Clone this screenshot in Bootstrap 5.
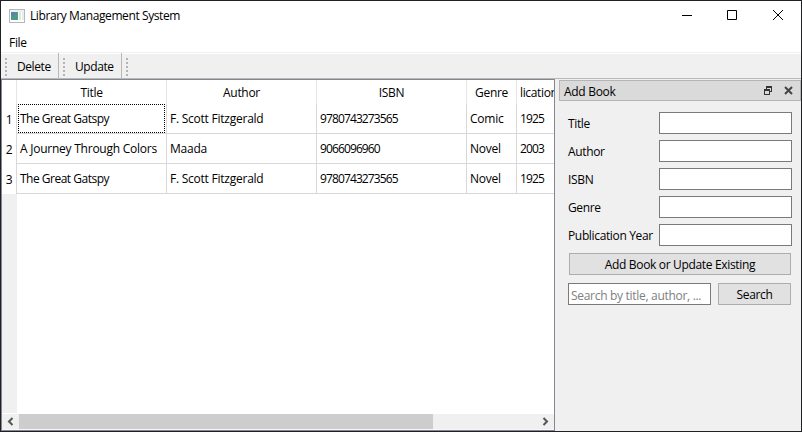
<!DOCTYPE html>
<html lang="en">
<head>
<meta charset="utf-8">
<meta name="viewport" content="width=device-width, initial-scale=1">
<title>Library Management System</title>
<link href="https://cdn.jsdelivr.net/npm/bootstrap@5.3.0/dist/css/bootstrap.min.css" rel="stylesheet">
<style>
body{font-family:"Open Sans","Noto Sans",sans-serif;font-size:12px;line-height:16px;color:#000;letter-spacing:-.3px;background:#fff}
.app{width:802px;height:432px;border:1px solid #202125;background:#f0f0f0}
.titlebar{height:30px;padding-left:8px;background:#fff}
.titlebar .caption{margin-left:5px;letter-spacing:-.4px}
.win-btn{width:46px;height:30px;border:0;background:none;padding:0}
.menus{height:21px;padding:2px 0 0 8px;background:#fff}
.tools{height:27px;border-top:1px solid #f0f0f0;border-bottom:1px solid #b8b8b8;box-shadow:inset 0 1px #fff}
.tool-group{height:25px;padding-top:2px;border-right:1px solid #b8b8b8}
.delete-group{width:58px}
.update-group{width:63px}
.grip{width:3px;height:18px;margin:0 9px 0 4px;background:radial-gradient(circle at 1px 1px,#b4b4b4 1.1px,transparent 1.2px) 0 0/3px 4px}
.tool-btn{border:0;background:none;padding:0;color:#000;letter-spacing:-.42px}
.table-pane{width:554px;border:1px solid #828790;background:#fff}
.grid-rows{display:grid;grid-template-columns:15px 150px 150px 150px 50px 37px;overflow:hidden}
.grid-rows>div{border-right:1px solid #d8d8d8;overflow:hidden;white-space:nowrap}
.grid-rows>div:nth-child(6n){border-right:0}
.grid-rows>.hd{height:24px;line-height:26px;text-align:center;border-color:#e5e5e5}
.grid-rows>.hd-cut{text-align:left;padding-left:3px;letter-spacing:-.35px}
.grid-rows>.cell{height:30px;line-height:30px;padding-left:3px;border-bottom:1px solid #d8d8d8;letter-spacing:-.24px}
.grid-rows>.num{height:30px;line-height:31px;text-align:center}
.grid-rows>.gatspy{letter-spacing:-.5px}
.grid-rows>.current{padding:0 1px}
.current span{display:block;height:29px;border:1px dotted #000;padding-left:1px;line-height:28px}
.grid-rows>.digits{letter-spacing:-.88px}
.gutter{width:15px;background:#f0f0f0;margin-bottom:1px}
.hscroll{height:16px;border-bottom:1px solid #f8f8f8;background:#f0f0f0}
.thumb{width:414px;background:#cdcdcd}
.arrow{width:17px}
.dock{width:246px;padding:1px 0 0 4px}
.dock-title{height:21px;border:1px solid #b5b5b5;background:#dadada;padding:0 3px 0 4px}
.dock-title span{padding-top:2px}
.dock-body{padding:11px 9px 0 9px}
.form-line{height:22px;margin-bottom:6px}
.form-line label{padding-top:2px;letter-spacing:-.35px}
.field{height:22px;border:1px solid #7a7a7a;border-radius:0;background:#fff;padding:2px 2px 0;font-size:12px;letter-spacing:-.3px;color:#000;outline:0;min-width:0}
.field::placeholder{color:#808080;opacity:1}
.form-line .field{width:133px}
.push{height:22px;border:1px solid #adadad;background:#e1e1e1;padding:2px 0 0;color:#000;line-height:18px;letter-spacing:-.33px}
.wide-row{margin:7px 1px 8px 1px}
.search-row{gap:7px;margin-right:1px}
.search-row .push{width:73px}
</style>
<script src="https://cdn.jsdelivr.net/npm/bootstrap@5.3.0/dist/js/bootstrap.bundle.min.js"></script>
</head>
<body class="overflow-hidden">
<div class="app d-flex flex-column">
  <header class="titlebar d-flex align-items-center">
    <svg width="16" height="14" viewBox="0 0 16 14" shape-rendering="crispEdges"><path fill="#b3b8ba" d="M0 0h16v14H0z"/><path fill="#edf0f1" d="M1 1h14v2H1z"/><path fill="#fff" d="M1 3h14v10H1z"/><path fill="#4d998c" d="M2 3h7v8H2z"/><path fill="#5c83a3" d="M2 3h4v4H2z"/><path fill="#d9ebd9" d="M10 3h2v8h-2z"/><path fill="#e9ebed" d="M13 3h2v8h-2z"/></svg>
    <span class="caption">Library Management System</span>
    <div class="d-flex ms-auto">
      <button class="win-btn" aria-label="Minimize"><svg width="46" height="30" class="d-block"><path d="M19 14.500h10" stroke="#000"/></svg></button>
      <button class="win-btn" aria-label="Maximize"><svg width="46" height="30" class="d-block"><path d="M18.500 9.500h9v9h-9z" stroke="#000" fill="none"/></svg></button>
      <button class="win-btn" aria-label="Close"><svg width="46" height="30" class="d-block"><path d="M18 9l10 10M28 9L18 19" stroke="#000" fill="none"/></svg></button>
    </div>
  </header>
  <nav class="menus d-flex align-items-center"><span>File</span></nav>
  <div class="tools d-flex align-items-end">
    <div class="tool-group delete-group d-flex align-items-center"><i class="grip"></i><button class="tool-btn">Delete</button></div>
    <div class="tool-group update-group d-flex align-items-center"><i class="grip"></i><button class="tool-btn">Update</button></div>
    <div class="tool-group d-flex align-items-center border-0"><i class="grip"></i></div>
  </div>
  <main class="d-flex flex-grow-1">
    <section class="table-pane d-flex flex-column flex-shrink-0">
      <div class="grid-rows">
        <div class="hd"></div><div class="hd">Title</div><div class="hd">Author</div><div class="hd">ISBN</div><div class="hd">Genre</div><div class="hd hd-cut">lication</div>
        <div class="num">1</div><div class="cell gatspy current"><span>The Great Gatspy</span></div><div class="cell">F. Scott Fitzgerald</div><div class="cell digits">9780743273565</div><div class="cell">Comic</div><div class="cell digits">1925</div>
        <div class="num">2</div><div class="cell">A Journey Through Colors</div><div class="cell">Maada</div><div class="cell digits">9066096960</div><div class="cell">Novel</div><div class="cell digits">2003</div>
        <div class="num">3</div><div class="cell gatspy">The Great Gatspy</div><div class="cell">F. Scott Fitzgerald</div><div class="cell digits">9780743273565</div><div class="cell">Novel</div><div class="cell digits">1925</div>
      </div>
      <div class="gutter flex-grow-1"></div>
      <div class="hscroll d-flex">
        <svg class="arrow" height="15"><path d="M10.500 4l-3.500 3.500 3.500 3.500" fill="none" stroke="#555" stroke-width="2"/></svg>
        <div class="thumb"></div>
        <svg class="arrow ms-auto" height="15"><path d="M6.500 4l3.500 3.500-3.500 3.500" fill="none" stroke="#555" stroke-width="2"/></svg>
      </div>
    </section>
    <aside class="dock flex-shrink-0">
      <div class="dock-title d-flex align-items-center">
        <span>Add Book</span>
        <svg class="ms-auto" width="8" height="9" shape-rendering="crispEdges"><path fill="#333" d="M2 0h6v6H6V5h1V2H3v1H2zM0 3h6v6H0zm1 2v3h4V5z" fill-rule="evenodd"/></svg>
        <svg class="ms-2" width="17" height="9"><path d="M5 1l7 7M12 1L5 8" stroke="#444" stroke-width="2"/></svg>
      </div>
      <div class="dock-body">
        <div class="form-line d-flex align-items-center justify-content-between"><label for="t">Title</label><input id="t" class="field"></div>
        <div class="form-line d-flex align-items-center justify-content-between"><label for="a">Author</label><input id="a" class="field"></div>
        <div class="form-line d-flex align-items-center justify-content-between"><label for="i">ISBN</label><input id="i" class="field"></div>
        <div class="form-line d-flex align-items-center justify-content-between"><label for="g">Genre</label><input id="g" class="field"></div>
        <div class="form-line d-flex align-items-center justify-content-between"><label for="y">Publication Year</label><input id="y" class="field"></div>
        <div class="d-flex wide-row"><button class="push flex-grow-1">Add Book or Update Existing</button></div>
        <div class="d-flex search-row"><input class="field flex-grow-1" placeholder="Search by title, author, ..."><button class="push flex-shrink-0">Search</button></div>
      </div>
    </aside>
  </main>
</div>
</body>
</html>
